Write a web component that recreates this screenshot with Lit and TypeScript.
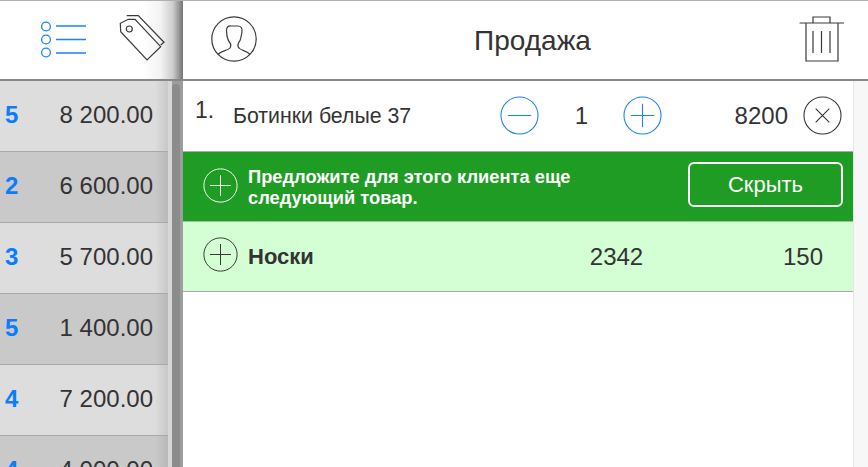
import { LitElement, html, css, svg } from "lit";
import { customElement } from "lit/decorators.js";

const rows = [
  ["5", "8 200.00"],
  ["2", "6 600.00"],
  ["3", "5 700.00"],
  ["5", "1 400.00"],
  ["4", "7 200.00"],
  ["4", "4 000.00"],
];

const circle = (kind: "plus" | "minus" | "x", cls: string) => html`
  <svg class="round ${cls}" viewBox="0 0 40 40" fill="none" stroke="currentColor" stroke-width="1.1">
    <circle cx="20" cy="20" r="19"></circle>
    ${kind === "x"
      ? svg`<path d="M13 13L27 27M27 13L13 27"></path>`
      : kind === "minus"
      ? svg`<path d="M8 20H32"></path>`
      : svg`<path d="M8 20H32M20 8V32"></path>`}
  </svg>`;

@customElement("app-root")
export class AppRoot extends LitElement {
  static styles = css`
    :host {
      display: flex;
      width: 868px;
      height: 467px;
      overflow: hidden;
      background: #fff;
      font-family: "Liberation Sans", Arial, sans-serif;
      color: #333;
    }
    .left {
      width: 183px;
      flex: none;
      display: flex;
      flex-direction: column;
    }
    .head {
      height: 78px;
      flex: none;
      box-sizing: content-box;
      border-top: 1px solid #b0b0b0;
      border-bottom: 2px solid #888;
      background: #fff;
      display: flex;
      align-items: center;
    }
    .left .head {
      position: relative;
      padding-left: 40px;
      gap: 32px;
      align-items: flex-start;
    }
    .left .head::after {
      content: "";
      position: absolute;
      top: 0;
      bottom: 0;
      right: 0;
      width: 40px;
      background: linear-gradient(90deg, rgba(0,0,0,0), rgba(0,0,0,.05) 45%, rgba(0,0,0,.2) 75%, rgba(0,0,0,.55));
    }
    .list-ic { width: 46px; height: 38px; margin-top: 20px; color: #1a82fb; flex: none; }
    .tag-ic { width: 48px; height: 48px; margin-top: 13px; color: #3a3a3a; flex: none; }
    .body {
      flex: 1;
      display: flex;
      min-height: 0;
      overflow: hidden;
    }
    .rows { width: 168px; flex: none; }
    .row {
      height: 70px;
      border-bottom: 1px solid #a9a9a9;
      display: flex;
      align-items: center;
      justify-content: space-between;
      padding: 0 15px 0 5px;
      background: linear-gradient(90deg, #ddd 0, #ddd 155px, #c8c8c8 100%);
    }
    .row:nth-child(even) {
      background: linear-gradient(90deg, #c9c9c9 0, #c9c9c9 155px, #b8b8b8 100%);
    }
    .rank { font-size: 24px; font-weight: 700; color: #0a7cff; margin-bottom: 2px; }
    .sum { font-size: 24px; margin-bottom: 2px; }
    .track {
      flex: 1;
      background: linear-gradient(90deg, #d6d6d6 0, #d6d6d6 4px, #9d9d9d 4px, #9d9d9d 100%);
      padding: 3px 3px 0 4px;
    }
    .thumb {
      height: 100%;
      background: #8c8c8c;
      border-radius: 4px 4px 0 0;
    }
    .right {
      flex: 1;
      min-width: 0;
      display: flex;
      flex-direction: column;
    }
    .right .head {
      padding: 0 23px 0 28px;
      justify-content: space-between;
    }
    .user-ic { width: 46px; height: 46px; color: #3a3a3a; margin-bottom: 3px; }
    .trash-ic { width: 46px; height: 48px; color: #3a3a3a; }
    .title { font-size: 28px; margin-left: 9px; padding-top: 2px; }
    .content {
      flex: 1;
      display: flex;
      min-height: 0;
    }
    .main { flex: 1; min-width: 0; }
    .strip { width: 14px; flex: none; background: #f7f7f7; border-left: 1px solid #e6e6e6; }
    .round { width: 39px; height: 39px; flex: none; display: block; }
    .item .round { margin-bottom: 2px; }
    .blue { color: #1a82fb; }
    .dark { color: #333; }
    .white { color: #fff; }
    .item {
      height: 70px;
      display: flex;
      align-items: center;
      font-size: 21.3px;
    }
    .num { width: 38px; margin-left: 12px; font-size: 23px; align-self: flex-start; margin-top: 16px; }
    .name { width: 267px; }
    .qty { width: 84px; text-align: center; font-size: 24px; text-indent: 1px; }
    .price { width: 126px; text-align: right; font-size: 24px; margin-right: 15px; }
    .offer {
      height: 69px;
      border-top: 1px solid #9fb39f;
      border-bottom: 1px solid #9dbd9d;
      background: #1f9c23;
      color: #fff;
      display: flex;
      align-items: center;
      padding: 0 10px 0 20px;
      gap: 10px;
    }
    .offer .round, .sock .round { width: 35px; height: 35px; }
    .offer .round { margin-bottom: 3px; }
    .sock .round { margin-bottom: 4px; }
    .msg { flex: 1; font-size: 18.3px; font-weight: 700; line-height: 21px; }
    .hide {
      width: 151px;
      height: 41px;
      box-sizing: content-box;
      border: 2px solid #fff;
      border-radius: 6px;
      display: flex;
      align-items: center;
      justify-content: center;
      font-size: 22px;
      background: none;
      color: #fff;
      font-family: inherit;
      padding: 0;
      margin-bottom: 4px;
    }
    .sock {
      height: 69px;
      border-bottom: 1px solid #aaa;
      background: #d4ffd4;
      display: flex;
      align-items: center;
      padding-left: 20px;
      gap: 10px;
    }
    .sock-name { width: 301px; font-size: 22px; font-weight: 700; }
    .sock-code { width: 115px; font-size: 24px; text-align: center; }
    .sock-price { width: 139px; font-size: 24px; text-align: right; }
  `;

  render() {
    return html`
      <div class="left">
        <div class="head">
          <svg class="list-ic" viewBox="0 0 46 38" fill="none" stroke="currentColor" stroke-width="1.3">
            <circle cx="6" cy="5.5" r="4.4"></circle>
            <circle cx="6" cy="18.5" r="4.4"></circle>
            <circle cx="6" cy="31.5" r="4.4"></circle>
            <path d="M16 5H46M16 18.5H46M16 32H46"></path>
          </svg>
          <svg class="tag-ic" viewBox="0 0 48 48" fill="none" stroke="currentColor" stroke-width="1.2">
            <path d="M2.3 9.3L2.7 17.7L29 46L42.7 32.7L17 5.3H10.3Z"></path>
            <circle cx="11.3" cy="15" r="3"></circle>
            <path d="M8.7 1.7H20.3L46 28.3L42.7 31"></path>
          </svg>
        </div>
        <div class="body">
          <div class="rows">
            ${rows.map(
              (r) => html`<div class="row"><span class="rank">${r[0]}</span><span class="sum">${r[1]}</span></div>`
            )}
          </div>
          <div class="track"><div class="thumb"></div></div>
        </div>
      </div>
      <div class="right">
        <div class="head">
          <svg class="user-ic" viewBox="0 0 46 46" fill="none" stroke="currentColor" stroke-width="1.2">
            <circle cx="23" cy="23" r="22.2"></circle>
            <path d="M7 38.5C10 35 17 34.5 19 32C20 30 20 28 19 27C17 25 16.5 22 16 20L15.5 15C15 11 18 9.5 20 10L27 10C30 10 31.5 12 31 16L30 21C29.5 24 28.5 26 27.5 27C26.5 29 27 31 28 32C30 34.5 36 35 39 38.5"></path>
          </svg>
          <span class="title">Продажа</span>
          <svg class="trash-ic" viewBox="0 0 46 48" fill="none" stroke="currentColor" stroke-width="1.2">
            <path d="M0.5 7H45"></path>
            <path d="M14 7V1H31V7"></path>
            <path d="M7 7V45H39V7"></path>
            <path d="M14 15V37M22.5 15V37M31 15V37"></path>
          </svg>
        </div>
        <div class="content">
          <div class="main">
            <div class="item">
              <span class="num">1.</span>
              <span class="name">Ботинки белые 37</span>
              ${circle("minus", "blue")}
              <span class="qty">1</span>
              ${circle("plus", "blue")}
              <span class="price">8200</span>
              ${circle("x", "dark")}
            </div>
            <div class="offer">
              ${circle("plus", "white")}
              <div class="msg">Предложите для этого клиента еще<br />следующий товар.</div>
              <button class="hide">Скрыть</button>
            </div>
            <div class="sock">
              ${circle("plus", "dark")}
              <span class="sock-name">Носки</span>
              <span class="sock-code">2342</span>
              <span class="sock-price">150</span>
            </div>
          </div>
          <div class="strip"></div>
        </div>
      </div>
    `;
  }
}
